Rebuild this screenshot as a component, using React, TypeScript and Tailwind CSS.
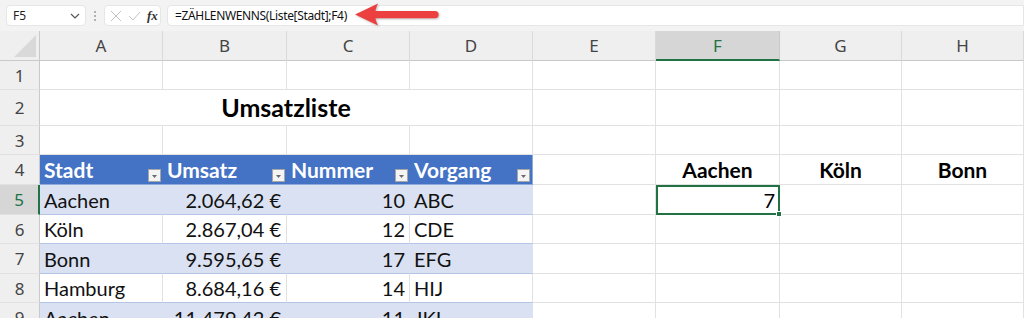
import * as React from 'react';

const COLS = 'grid grid-cols-[40px_123px_124px_123px_123px_123px_124px_122px_122px] leading-none';
const calibri = { fontFamily: 'Lato, "Liberation Sans", sans-serif' };
const segoe = { fontFamily: '"Noto Sans", "Open Sans", sans-serif' };

type Row = {
  n: number;
  h: string;
  cells: React.ReactNode;
  active?: boolean;
};

/** a plain worksheet cell with the default grid lines */
function Cell({ className = '', children }: { className?: string; children?: React.ReactNode }) {
  return (
    <div className={`flex items-center overflow-hidden whitespace-nowrap border-r border-b border-[#e1e1e1] px-1 ${className}`}>
      {children}
    </div>
  );
}

/** small filter dropdown in the table header */
function FilterButton() {
  return (
    <span className="ml-auto flex h-[13px] w-[13px] shrink-0 items-end justify-center self-end mb-[2px] border border-[#a6a6a6] bg-[#f4f4f4]">
      <svg width="7" height="5" viewBox="0 0 7 5" className="mb-[2px]">
        <path d="M1 1h5L3.5 4z" fill="#6b6b6b" />
      </svg>
    </span>
  );
}

function HeaderCell({ label, last = false }: { label: string; last?: boolean }) {
  return (
    <div
      className={`flex items-center border-b border-[#8eaadb] bg-[#4472c4] pl-1 pr-[2px] text-[21px] font-bold text-white ${
        last ? 'border-r border-r-[#8eaadb]' : ''
      }`}
    >
      <span className="leading-none">{label}</span>
      <FilterButton />
    </div>
  );
}

function TableRow({
  city,
  amount,
  num,
  code,
  banded,
}: {
  city: string;
  amount: string;
  num: string;
  code: string;
  banded: boolean;
}) {
  const bg = banded ? 'bg-[#d9e1f2] border-r-[#d9e1f2]' : 'bg-white border-r-[#e1e1e1]';
  const base = `flex items-center overflow-hidden whitespace-nowrap border-b border-r border-b-[#b4c6e7] px-1 text-[20px] text-[#111] ${bg}`;
  return (
    <>
      <div className={base}>{city}</div>
      <div className={`${base} justify-end pr-[5px]`}>{amount}</div>
      <div className={`${base} justify-end pr-[4px]`}>{num}</div>
      <div className={`${base} border-r-[#8eaadb]`}>{code}</div>
    </>
  );
}

export default function App() {
  const rows: Row[] = [
    { n: 1, h: 'h-[29px]', cells: <>{Array.from({ length: 8 }).map((_, i) => <Cell key={i} />)}</> },
    {
      n: 2,
      h: 'h-[36px]',
      cells: (
        <>
          <Cell className="col-span-4 justify-center text-[25px] font-bold text-black">Umsatzliste</Cell>
          {Array.from({ length: 4 }).map((_, i) => <Cell key={i} />)}
        </>
      ),
    },
    { n: 3, h: 'h-[29px]', cells: <>{Array.from({ length: 8 }).map((_, i) => <Cell key={i} />)}</> },
    {
      n: 4,
      h: 'h-[30px]',
      cells: (
        <>
          <HeaderCell label="Stadt" />
          <HeaderCell label="Umsatz" />
          <HeaderCell label="Nummer" />
          <HeaderCell label="Vorgang" last />
          <Cell />
          <Cell className="justify-center text-[21px] font-bold text-black">Aachen</Cell>
          <Cell className="justify-center text-[21px] font-bold text-black">Köln</Cell>
          <Cell className="justify-center text-[21px] font-bold text-black">Bonn</Cell>
        </>
      ),
    },
    {
      n: 5,
      h: 'h-[30px]',
      active: true,
      cells: (
        <>
          <TableRow city="Aachen" amount="2.064,62 €" num="10" code="ABC" banded />
          <Cell />
          <div className="relative flex items-center justify-end border-2 border-[#217346] pr-[3px] text-[20px] text-black">
            7
            <span className="absolute -right-[4px] -bottom-[4px] h-[6px] w-[6px] border border-white bg-[#217346]" />
          </div>
          <Cell />
          <Cell />
        </>
      ),
    },
    {
      n: 6,
      h: 'h-[29px]',
      cells: (
        <>
          <TableRow city="Köln" amount="2.867,04 €" num="12" code="CDE" banded={false} />
          {Array.from({ length: 4 }).map((_, i) => <Cell key={i} />)}
        </>
      ),
    },
    {
      n: 7,
      h: 'h-[30px]',
      cells: (
        <>
          <TableRow city="Bonn" amount="9.595,65 €" num="17" code="EFG" banded />
          {Array.from({ length: 4 }).map((_, i) => <Cell key={i} />)}
        </>
      ),
    },
    {
      n: 8,
      h: 'h-[29px]',
      cells: (
        <>
          <TableRow city="Hamburg" amount="8.684,16 €" num="14" code="HIJ" banded={false} />
          {Array.from({ length: 4 }).map((_, i) => <Cell key={i} />)}
        </>
      ),
    },
    {
      n: 9,
      h: 'h-[30px]',
      cells: (
        <>
          <TableRow city="Aachen" amount="11.479,42 €" num="11" code="JKL" banded />
          {Array.from({ length: 4 }).map((_, i) => <Cell key={i} />)}
        </>
      ),
    },
  ];

  const letters = ['A', 'B', 'C', 'D', 'E', 'F', 'G', 'H'];

  return (
    <div className="relative h-[318px] w-[1024px] overflow-hidden bg-white">
      {/* Formula bar */}
      <div className="flex h-[31px] items-center bg-[#f3f3f3] pl-[6px]" style={segoe}>
        <div className="flex h-[21px] w-[80px] items-center justify-between rounded-[4px] border border-[#e6e6e6] bg-white pl-[6px] pr-[5px] text-[12px] text-[#222]">
          <span>F5</span>
          <svg width="10" height="6" viewBox="0 0 10 6">
            <path d="M1 1l4 4 4-4" fill="none" stroke="#555" strokeWidth="1.2" />
          </svg>
        </div>
        <div className="mx-[8px] flex flex-col gap-[2px]">
          <span className="h-[2px] w-[2px] rounded-full bg-[#9a9a9a]" />
          <span className="h-[2px] w-[2px] rounded-full bg-[#9a9a9a]" />
          <span className="h-[2px] w-[2px] rounded-full bg-[#9a9a9a]" />
        </div>
        <div className="flex h-[21px] w-[57px] items-center gap-[6px] rounded-[4px] border border-[#e6e6e6] bg-white pl-[5px]">
          <svg width="12" height="12" viewBox="0 0 12 12">
            <path d="M1 1l10 10M11 1L1 11" stroke="#c4c4c4" strokeWidth="1" />
          </svg>
          <svg width="13" height="10" viewBox="0 0 13 10">
            <path d="M1 5l4 4 7-8" fill="none" stroke="#c4c4c4" strokeWidth="1" />
          </svg>
          <span className="text-[13px] font-bold italic text-[#333]" style={{ fontFamily: '"Liberation Serif", serif' }}>
            fx
          </span>
        </div>
        <div className="ml-[6px] flex h-[21px] flex-1 items-center rounded-l-[4px] border border-[#e6e6e6] bg-white pl-[7px] text-[12px] tracking-[-0.35px] text-[#111]">
          =ZÄHLENWENNS(Liste[Stadt];F4)
        </div>
      </div>

      {/* Red annotation arrow */}
      <svg className="absolute left-[350px] top-0" width="95" height="31" viewBox="0 0 95 31">
        <g fill="#ec3f3f" style={{ filter: 'drop-shadow(1px 1.5px 1px rgba(0,0,0,0.25))' }}>
          <path d="M5 14.5L28 3.5Q25.5 9 25.5 11H85a3.6 3.6 0 0 1 0 7.2H25.5Q25.5 20 28 25.5z" />
        </g>
      </svg>

      {/* Column headers */}
      <div className={`${COLS} h-[30px] bg-[#efefef] text-[17px] text-[#444]`} style={segoe}>
        <div className="relative border-r border-b border-[#c9c9c9]">
          <svg className="absolute right-[3px] bottom-[3px]" width="22" height="22" viewBox="0 0 22 22">
            <path d="M22 0V22H0z" fill="#d9d9d9" />
          </svg>
        </div>
        {letters.map((l) =>
          l === 'F' ? (
            <div key={l} className="flex items-center justify-center border-r border-[#c9c9c9] border-b-2 border-b-[#217346] bg-[#d6d6d6] text-[#217346]">
              {l}
            </div>
          ) : (
            <div key={l} className="flex items-center justify-center border-r border-b border-[#dadada] border-b-[#c9c9c9]">
              {l}
            </div>
          ),
        )}
      </div>

      {/* Rows */}
      {rows.map((r) => (
        <div key={r.n} className={`${COLS} ${r.h}`} style={calibri}>
          <div
            className={`flex items-center justify-center border-b border-[#e1e1e1] text-[17px] ${
              r.active
                ? 'border-r-2 border-r-[#217346] bg-[#d6d6d6] text-[#217346]'
                : 'border-r border-r-[#c9c9c9] bg-[#efefef] text-[#444]'
            }`}
            style={segoe}
          >
            {r.n}
          </div>
          {r.cells}
        </div>
      ))}
    </div>
  );
}
